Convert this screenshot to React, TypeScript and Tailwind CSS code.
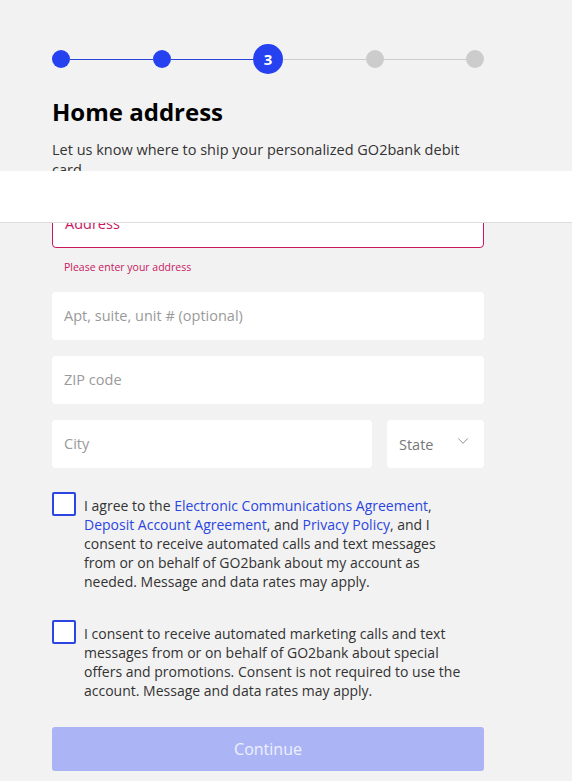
import { ChevronDown } from "lucide-react";

const font = { fontFamily: "'Open Sans', 'Noto Sans', sans-serif" };

function Stepper() {
  return (
    <div className="flex items-center">
      <span className="h-[18px] w-[18px] rounded-full bg-[#2541f0]" />
      <span className="h-px flex-1 bg-[#2a44d8]" />
      <span className="h-[18px] w-[18px] rounded-full bg-[#2541f0]" />
      <span className="h-px flex-1 bg-[#2a44d8]" />
      <span className="flex h-[30px] w-[30px] items-center justify-center rounded-full bg-[#2541f0] text-[15px] font-bold text-white">
        3
      </span>
      <span className="h-px flex-1 bg-[#cccccc]" />
      <span className="h-[18px] w-[18px] rounded-full bg-[#cccccc]" />
      <span className="h-px flex-1 bg-[#cccccc]" />
      <span className="h-[18px] w-[18px] rounded-full bg-[#cccccc]" />
    </div>
  );
}

function Field({ label, className = "" }: { label: string; className?: string }) {
  return (
    <div
      className={`flex h-[48px] items-center rounded-[4px] bg-white px-[12px] text-[14.5px] text-[#9a9a9a] ${className}`}
    >
      {label}
    </div>
  );
}

function Check({ children }: { children: React.ReactNode }) {
  return (
    <div className="flex items-start gap-[8px]">
      <span className="h-[24px] w-[24px] shrink-0 rounded-[2px] border-2 border-[#2b45e0] bg-white" />
      <p className="pt-[4px] pr-[14px] text-[14px] leading-[19px] text-[#333333]">{children}</p>
    </div>
  );
}

export default function App() {
  return (
    <div className="relative min-h-screen bg-[#f2f2f2]" style={font}>
      <div className="pt-[44px] pr-[88px] pb-[10px] pl-[52px]">
        <Stepper />

        <h1 className="mt-[23px] text-[24px] leading-[30px] font-bold text-black">Home address</h1>
        <p className="mt-[13px] pr-[10px] text-[14.5px] leading-[20px] text-[#333333]">
          Let us know where to ship your personalized GO2bank debit card
        </p>

        <div className="mt-[20px] flex h-[48px] items-center rounded-[4px] border border-[#c8175f] bg-white px-[12px] text-[14.5px] text-[#c8175f]">
          Address
        </div>
        <p className="mt-[12px] pl-[12px] text-[10.5px] leading-[14px] text-[#c8175f]">
          Please enter your address
        </p>

        <div className="mt-[18px] flex flex-col gap-[16px]">
          <Field label="Apt, suite, unit # (optional)" />
          <Field label="ZIP code" />
          <div className="flex gap-[15px]">
            <Field label="City" className="flex-1" />
            <div className="flex h-[48px] w-[97px] items-start justify-between rounded-[4px] bg-white px-[12px] pt-[14px] text-[14.5px] text-[#777777]">
              <span>State</span>
              <ChevronDown size={18} strokeWidth={1.25} className="mt-[-2px] text-[#888888]" />
            </div>
          </div>
        </div>

        <div className="mt-[24px] flex flex-col gap-[29px]">
          <Check>
            I agree to the <span className="text-[#2b45e0]">Electronic Communications Agreement</span>,{" "}
            <span className="text-[#2b45e0]">Deposit Account Agreement</span>, and{" "}
            <span className="text-[#2b45e0]">Privacy Policy</span>, and I consent to receive automated calls and
            text messages from or on behalf of GO2bank about my account as needed. Message and data rates may
            apply.
          </Check>
          <Check>
            I consent to receive automated marketing calls and text messages from or on behalf of GO2bank about
            special offers and promotions. Consent is not required to use the account. Message and data rates may
            apply.
          </Check>
        </div>

        <button className="mt-[27px] flex h-[44px] w-full items-center justify-center rounded-[3px] bg-[#abb5f5] text-[16px] text-[#eef0ff]">
          Continue
        </button>
      </div>

      <div className="absolute top-[171px] right-0 left-0 h-[52px] border-b border-[#dddddd] bg-white" />
    </div>
  );
}
